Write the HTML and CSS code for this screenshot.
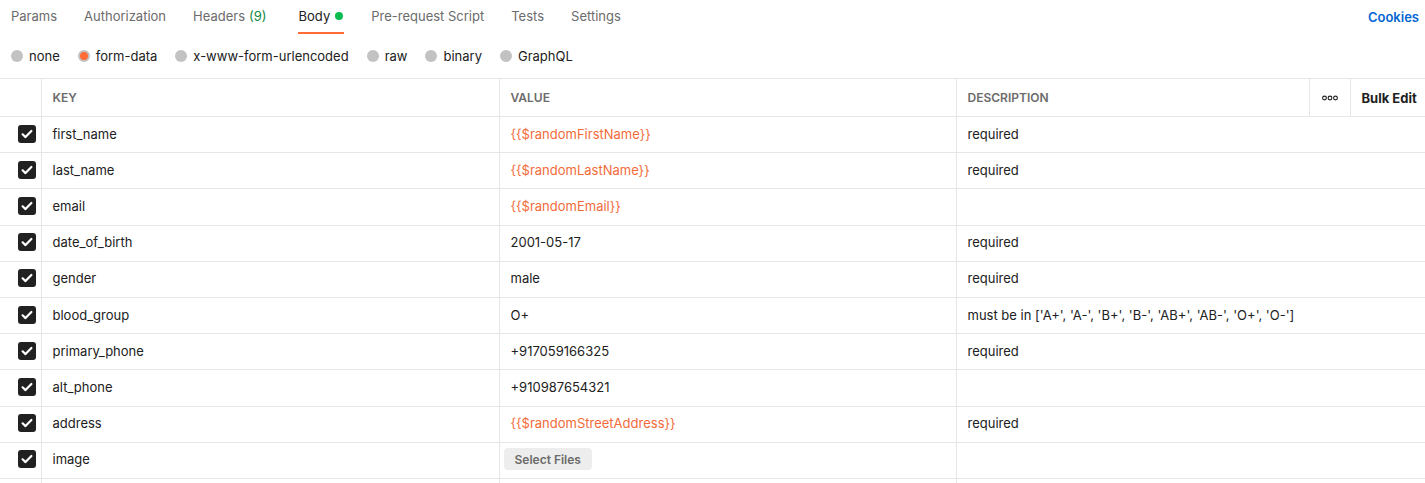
FILE: index.html
```
<!DOCTYPE html>
<html lang="en">

<head>
  <meta charset="UTF-8">
  <meta name="viewport" content="width=device-width, initial-scale=1.0">
  <title>Body - form-data</title>
  <link rel="stylesheet" href="styles.css">
</head>

<body>
  <div class="tabs">
    <ul class="tab-list">
      <li>Params</li>
      <li>Authorization</li>
      <li>Headers <span class="count">(9)</span></li>
      <li class="active">Body <span class="dot"></span></li>
      <li>Pre-request Script</li>
      <li>Tests</li>
      <li>Settings</li>
    </ul>
    <a class="cookies">Cookies</a>
  </div>

  <ul class="modes">
    <li><span class="radio"></span>none</li>
    <li><span class="radio on"></span>form-data</li>
    <li><span class="radio"></span>x-www-form-urlencoded</li>
    <li><span class="radio"></span>raw</li>
    <li><span class="radio"></span>binary</li>
    <li><span class="radio"></span>GraphQL</li>
  </ul>

  <table class="params">
    <colgroup>
      <col class="c-check">
      <col class="c-key">
      <col class="c-value">
      <col class="c-desc">
      <col class="c-more">
      <col class="c-bulk">
    </colgroup>
    <thead>
      <tr>
        <th></th>
        <th>Key</th>
        <th>Value</th>
        <th>Description</th>
        <th class="more">
          <svg width="16" height="6" viewBox="0 0 16 6">
            <circle cx="2.5" cy="3" r="1.9" fill="none" stroke="#212121" stroke-width="1.1"/>
            <circle cx="8" cy="3" r="1.9" fill="none" stroke="#212121" stroke-width="1.1"/>
            <circle cx="13.5" cy="3" r="1.9" fill="none" stroke="#212121" stroke-width="1.1"/>
          </svg>
        </th>
        <th class="bulk">Bulk Edit</th>
      </tr>
    </thead>
    <tbody>
      <tr>
        <td class="check"><span class="box"></span></td>
        <td>first_name</td>
        <td class="var">{{$randomFirstName}}</td>
        <td colspan="3">required</td>
      </tr>
      <tr>
        <td class="check"><span class="box"></span></td>
        <td>last_name</td>
        <td class="var">{{$randomLastName}}</td>
        <td colspan="3">required</td>
      </tr>
      <tr>
        <td class="check"><span class="box"></span></td>
        <td>email</td>
        <td class="var">{{$randomEmail}}</td>
        <td colspan="3"></td>
      </tr>
      <tr>
        <td class="check"><span class="box"></span></td>
        <td>date_of_birth</td>
        <td>2001-05-17</td>
        <td colspan="3">required</td>
      </tr>
      <tr>
        <td class="check"><span class="box"></span></td>
        <td>gender</td>
        <td>male</td>
        <td colspan="3">required</td>
      </tr>
      <tr>
        <td class="check"><span class="box"></span></td>
        <td>blood_group</td>
        <td>O+</td>
        <td colspan="3">must be in ['A+', 'A-', 'B+', 'B-', 'AB+', 'AB-', 'O+', 'O-']</td>
      </tr>
      <tr>
        <td class="check"><span class="box"></span></td>
        <td>primary_phone</td>
        <td>+917059166325</td>
        <td colspan="3">required</td>
      </tr>
      <tr>
        <td class="check"><span class="box"></span></td>
        <td>alt_phone</td>
        <td>+910987654321</td>
        <td colspan="3"></td>
      </tr>
      <tr>
        <td class="check"><span class="box"></span></td>
        <td>address</td>
        <td class="var">{{$randomStreetAddress}}</td>
        <td colspan="3">required</td>
      </tr>
      <tr>
        <td class="check"><span class="box"></span></td>
        <td>image</td>
        <td class="file"><button class="select">Select Files</button></td>
        <td colspan="3"></td>
      </tr>
      <tr class="empty">
        <td class="check"></td>
        <td></td>
        <td></td>
        <td colspan="3"></td>
      </tr>
    </tbody>
  </table>
</body>

</html>
```

FILE: styles.css
```
body {
  margin: 0;
  font-family: Inter, "Noto Sans", sans-serif;
  font-size: 13px;
  color: #212121;
  background: #fff;
  overflow: hidden;
}

ul,
ul li {
  list-style: none;
  margin: 0;
  padding: 0;
}

/* tabs */
.tabs {
  display: flex;
  justify-content: space-between;
  align-items: flex-start;
  height: 34px;
  padding: 0 6px 0 11px;
}

.tab-list {
  display: flex;
  gap: 27px;
}

.tab-list li {
  display: flex;
  align-items: center;
  height: 34px;
  box-sizing: border-box;
  color: #6b6b6b;
  border-bottom: 2px solid transparent;
}

.tab-list li.active {
  color: #212121;
  border-bottom-color: #ff6c37;
  padding: 0 1px;
  margin-left: 4px;
}

.count {
  color: #0f8a3f;
  margin-left: 4px;
}

.dot {
  width: 8px;
  height: 8px;
  border-radius: 50%;
  background: #0cbb52;
  margin-left: 5px;
}

.cookies {
  line-height: 34px;
  padding-bottom: 2px;
  color: #0265d2;
  font-weight: 600;
}

/* body modes */
.modes {
  display: flex;
  align-items: center;
  gap: 18px;
  height: 44px;
  padding-left: 11px;
}

.modes li {
  display: flex;
  align-items: center;
  color: #212121;
}

.radio {
  width: 12px;
  height: 12px;
  border-radius: 50%;
  background: #c2c2c2;
  margin-right: 6px;
  box-sizing: border-box;
}

.radio.on {
  background: #ff6c37;
  border: 2px solid #c2c2c2;
}

/* table */
.params {
  width: 1425px;
  border-collapse: collapse;
  table-layout: fixed;
}

.c-check { width: 41px; }
.c-key { width: 458px; }
.c-value { width: 457px; }
.c-desc { width: 353px; }
.c-more { width: 41px; }
.c-bulk { width: 75px; }

.params th,
.params td {
  border: 1px solid #e6e6e6;
  padding: 0 11px;
  text-align: left;
  white-space: nowrap;
  overflow: hidden;
}

.params tr > :first-child {
  border-left: none;
}

.params tr > :last-child {
  border-right: none;
}

.params th {
  height: 37px;
  font-size: 12px;
  font-weight: 600;
  color: #6b6b6b;
  text-transform: uppercase;
}

.params th.more {
  text-align: center;
  padding: 0;
  line-height: 0;
}

.params th.bulk {
  text-transform: none;
  font-size: 13px;
  color: #212121;
  font-weight: 700;
}

.params td {
  height: 33.2px;
  padding-bottom: 2px;
}

.params td.check {
  padding: 0 0 2px 18px;
}

.box {
  display: block;
  width: 18px;
  height: 18px;
  border-radius: 3px;
  background: #212121 url("data:image/svg+xml,%3Csvg xmlns='http://www.w3.org/2000/svg' viewBox='0 0 18 18'%3E%3Cpath d='M4.6 9.3l2.9 2.8 5.9-6.1' fill='none' stroke='%23fff' stroke-width='2.2' stroke-linecap='round' stroke-linejoin='round'/%3E%3C/svg%3E") center / 18px 18px no-repeat;
}

.params td.var {
  color: #f26b3a;
}

.params td.file {
  padding-left: 4px;
}

.select {
  font-family: inherit;
  font-size: 12px;
  font-weight: 600;
  color: #6b6b6b;
  background: #ededed;
  border: none;
  border-radius: 4px;
  height: 22px;
  padding: 0 11px;
}
```
